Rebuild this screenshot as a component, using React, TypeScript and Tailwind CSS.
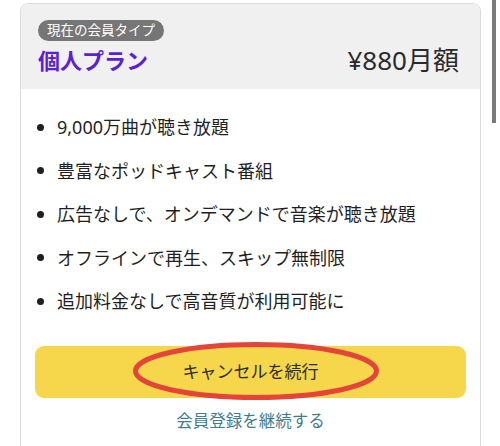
import React from 'react';

const features = [
  '9,000万曲が聴き放題',
  '豊富なポッドキャスト番組',
  '広告なしで、オンデマンドで音楽が聴き放題',
  'オフラインで再生、スキップ無制限',
  '追加料金なしで高音質が利用可能に',
];

export default function App() {
  return (
    <div
      className="relative w-[500px] h-[446px] overflow-hidden bg-white"
      style={{ fontFamily: '"Noto Sans", "Noto Sans CJK JP", sans-serif' }}
    >
      {/* scrollbar thumb */}
      <div className="absolute right-[4px] top-0 w-[4px] h-[123px] bg-[#7a7a7a]" />

      <div className="ml-[20px] mt-[3px] w-[461px] h-[480px] rounded-t-[8px] border border-[#dcdcdc]">
        <div className="h-[85px] rounded-t-[8px] bg-[#f0f0f0] pl-[17px] pr-[21px] pt-[13px]">
          <span className="inline-flex items-center h-[21px] px-[9px] rounded-full bg-[#767676] text-white text-[13.5px] leading-none">
            現在の会員タイプ
          </span>
          <div className="flex items-center justify-between mt-[4px]">
            <span className="text-[22px] leading-[30px] font-bold text-[#5b1fd4]">個人プラン</span>
            <span className="text-[26px] leading-[30px] text-[#2a2a2a]">¥880月額</span>
          </div>
        </div>

        <ul className="flex flex-col gap-[15.5px] pt-[24px] pl-[16px] text-[18px] leading-[28px] text-[#1f1f1f]">
          {features.map((f) => (
            <li key={f} className="flex items-center">
              <span className="w-[7px] h-[7px] rounded-full bg-[#1f1f1f] mr-[13px]" />
              {f}
            </li>
          ))}
        </ul>

        <div className="px-[14px] mt-[31px]">
          <div className="relative">
            <button className="w-full h-[52px] rounded-[9px] bg-[#f6d64a] text-[17px] text-[#2a2a2a]">
              キャンセルを続行
            </button>
            <svg
              className="absolute left-[98px] top-[-4px] pointer-events-none"
              width="250"
              height="60"
              viewBox="0 0 250 60"
            >
              <ellipse cx="123" cy="29" rx="120.5" ry="26.5" fill="none" stroke="#e5443b" strokeWidth="5" />
            </svg>
          </div>
          <div className="mt-[11px] text-center text-[16.5px] leading-[24px] text-[#3f7d8c]">
            会員登録を継続する
          </div>
        </div>
      </div>
    </div>
  );
}
